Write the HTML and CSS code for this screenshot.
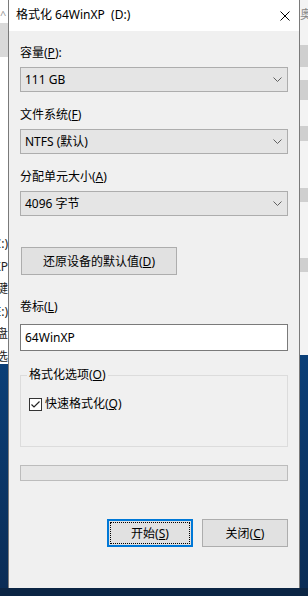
FILE: index.html
```html
<!DOCTYPE html>
<html lang="zh-CN">
<head>
    <meta charset="UTF-8">
    <meta name="viewport" content="width=device-width, initial-scale=1.0">
    <title>格式化</title>
    <link rel="stylesheet" href="styles.css">
</head>
<body>
    <!-- Explorer window behind the dialog -->
    <div class="behind">
        <div class="behind-left">
            <div class="caret">^</div>
            <div class="behind-band"></div>
            <div class="peek-list">
                <span>本地磁盘 (C:)</span>
                <span>64WinXP</span>
                <span>快捷键</span>
                <span>新加卷 (E:)</span>
                <span>磁盘</span>
                <span>优选</span>
            </div>
        </div>
        <div class="behind-right">
            <div class="glyph">奥</div>
            <div class="strip s1"></div>
            <div class="strip s2"></div>
            <div class="strip s3"></div>
            <div class="strip s4"></div>
            <div class="strip s5"></div>
        </div>
    </div>
    <div class="taskbar"></div>

    <div class="dialog">
        <div class="titlebar">
            <span class="title">格式化 64WinXP&nbsp;&nbsp;(D:)</span>
            <svg class="close" width="10" height="10" viewBox="0 0 10 10">
                <path d="M0.5 0.5 L9.5 9.5 M9.5 0.5 L0.5 9.5" stroke="#000" stroke-width="1" fill="none"/>
            </svg>
        </div>

        <div class="content">
            <div class="label">容量(<u>P</u>):</div>
            <div class="combo">
                <span>111 GB</span>
                <svg class="chev" width="9" height="5" viewBox="0 0 9 5"><path d="M0.5 0.5 L4.5 4.5 L8.5 0.5" stroke="#606060" fill="none"/></svg>
            </div>

            <div class="label gap">文件系统(<u>F</u>)</div>
            <div class="combo">
                <span>NTFS (默认)</span>
                <svg class="chev" width="9" height="5" viewBox="0 0 9 5"><path d="M0.5 0.5 L4.5 4.5 L8.5 0.5" stroke="#606060" fill="none"/></svg>
            </div>

            <div class="label gap">分配单元大小(<u>A</u>)</div>
            <div class="combo">
                <span>4096 字节</span>
                <svg class="chev" width="9" height="5" viewBox="0 0 9 5"><path d="M0.5 0.5 L4.5 4.5 L8.5 0.5" stroke="#606060" fill="none"/></svg>
            </div>

            <button class="btn restore">还原设备的默认值(<u>D</u>)</button>

            <div class="label vol">卷标(<u>L</u>)</div>
            <div class="textbox">64WinXP</div>

            <fieldset class="group">
                <legend>格式化选项(<u>O</u>)</legend>
                <div class="check-row">
                    <svg class="checkbox" width="13" height="13" viewBox="0 0 13 13">
                        <rect x="0.5" y="0.5" width="12" height="12" fill="#fff" stroke="#333"/>
                        <path d="M2.5 6.5 L5 9 L10.5 3.5" stroke="#222" stroke-width="1.2" fill="none"/>
                    </svg>
                    <span>快速格式化(<u>Q</u>)</span>
                </div>
            </fieldset>

            <div class="progress"></div>

            <div class="actions">
                <button class="btn action default"><span class="focus">开始(<u>S</u>)</span></button>
                <button class="btn action">关闭(<u>C</u>)</button>
            </div>
        </div>
    </div>
</body>
</html>
```

FILE: styles.css
```css
body {
    margin: 0;
    width: 308px;
    height: 596px;
    overflow: hidden;
    position: relative;
    font-family: "Noto Sans", "Noto Sans CJK SC", sans-serif;
    font-size: 12px;
    color: #000;
    background: linear-gradient(180deg, #0d5ca6 0%, #0a3f78 60%, #0a2c55 100%);
}

/* Window behind */
.behind {
    position: absolute;
    left: 0;
    top: 0;
    width: 308px;
    height: 355px;
    background: #fff;
}

.behind-left {
    position: absolute;
    left: 0;
    top: 0;
    width: 8px;
    height: 364px;
    background: #fff;
    overflow: hidden;
}

.caret {
    color: #999;
    font-size: 11px;
    line-height: 12px;
    padding-top: 9px;
    height: 23px;
    box-sizing: border-box;
}

.behind-band {
    height: 34px;
    background: #d9d9d9;
}

.peek-list {
    display: flex;
    flex-direction: column;
    align-items: flex-end;
    margin-top: 176px;
}

.peek-list span {
    white-space: nowrap;
    line-height: 22.6px;
    color: #222;
}

.behind-right {
    position: absolute;
    right: 0;
    top: 0;
    width: 8px;
    height: 355px;
    background: #f3f3f3;
    overflow: hidden;
}

.glyph {
    color: #888;
    font-size: 12px;
    line-height: 16px;
    padding-top: 7px;
}

.strip {
    position: absolute;
    left: 0;
    width: 8px;
    background: #cfcfcf;
}

.s1 { top: 45px; height: 22px; }
.s2 { top: 80px; height: 20px; }
.s3 { top: 126px; height: 15px; }
.s4 { top: 188px; height: 14px; }
.s5 { top: 258px; height: 14px; }

.taskbar {
    position: absolute;
    left: 0;
    bottom: 0;
    width: 308px;
    height: 8px;
    background: #0b2544;
}

/* Dialog */
.dialog {
    position: absolute;
    left: 8px;
    top: 0;
    width: 292px;
    height: 588px;
    box-sizing: border-box;
    background: #f0f0f0;
    border-left: 1px solid #7a7a7a;
    border-right: 1px solid #7a7a7a;
    z-index: 2;
}

.titlebar {
    height: 31px;
    background: #fff;
    display: flex;
    align-items: center;
    justify-content: space-between;
    padding: 0 9px 0 7px;
}

.title {
    line-height: 16px;
    padding-bottom: 2px;
}

.close {
    display: block;
}

.content {
    padding: 14px 11px 0;
}

.label {
    line-height: 16px;
    height: 16px;
}

.label.gap {
    margin-top: 15px;
}

.label.vol {
    margin-top: 24px;
}

.combo {
    margin-top: 6px;
    height: 25px;
    box-sizing: border-box;
    background: #e5e5e5;
    border: 1px solid #adadad;
    display: flex;
    align-items: center;
    justify-content: space-between;
    padding: 0 4px 0 4px;
}

.combo span {
    line-height: 16px;
}

.chev {
    display: block;
    margin-right: 1px;
}

.btn {
    font-family: inherit;
    font-size: 12px;
    color: #000;
    background: #e1e1e1;
    border: 1px solid #adadad;
    border-radius: 0;
    padding: 0;
    height: 28px;
    box-sizing: border-box;
    display: flex;
    align-items: center;
    justify-content: center;
}

.restore {
    margin-top: 31px;
    margin-left: 1px;
    width: 156px;
}

.textbox {
    margin-top: 9px;
    height: 27px;
    box-sizing: border-box;
    background: #fff;
    border: 1px solid #7a7a7a;
    padding: 0 4px;
    display: flex;
    align-items: center;
}

.group {
    margin: 16px 0 0;
    padding: 0 6px 34px;
    border: 1px solid #dcdcdc;
    min-width: 0;
}

.group legend {
    padding: 0 2px;
    line-height: 16px;
    margin-left: 0;
}

.check-row {
    margin-top: 13px;
    margin-left: 2px;
    display: flex;
    align-items: center;
    gap: 3px;
    line-height: 16px;
}

.checkbox {
    display: block;
}

.progress {
    margin-top: 18px;
    height: 16px;
    box-sizing: border-box;
    background: #e6e6e6;
    border: 1px solid #bcbcbc;
}

.actions {
    margin-top: 38px;
    display: flex;
    justify-content: flex-end;
    gap: 9px;
}

.action {
    width: 86px;
}

.default {
    border: 1px solid #0078d7;
    box-shadow: inset 0 0 0 1px #0078d7;
    padding: 2px;
}

.default .focus {
    flex: 1;
    align-self: stretch;
    display: flex;
    align-items: center;
    justify-content: center;
    border: 1px dotted #000;
}
```
